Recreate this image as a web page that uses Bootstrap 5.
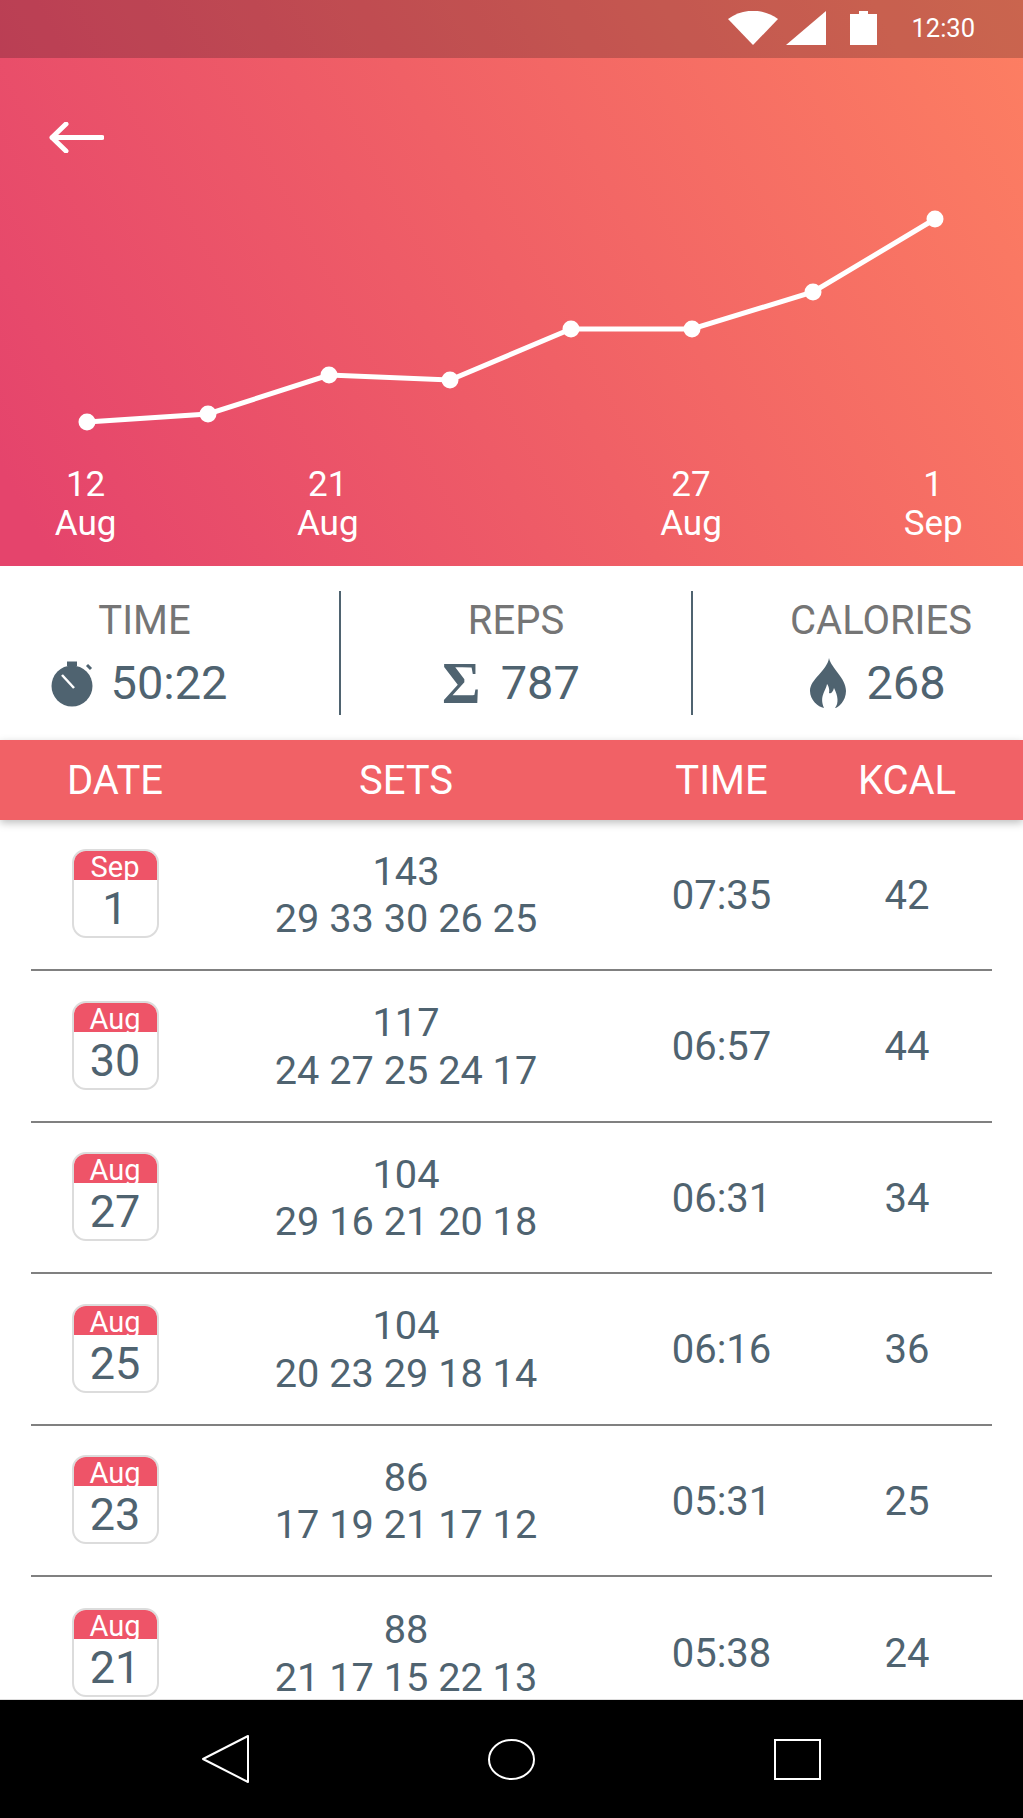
<!DOCTYPE html>
<html lang="en">
<head>
    <meta charset="UTF-8">
    <meta name="viewport" content="width=device-width, initial-scale=1.0">
    <title>Workout history</title>
    <link href="https://cdn.jsdelivr.net/npm/bootstrap@5.3.0/dist/css/bootstrap.min.css" rel="stylesheet">
    <style>
        body {
            width: 1023px;
            height: 1818px;
            overflow: hidden;
            font-family: Roboto, "Liberation Sans", sans-serif;
            color: #4f6370;
        }
        .hero {
            height: 566px;
            background: linear-gradient(62deg, #e5446c 4%, #f06066 50%, #fd7f62 100%);
        }
        .status-bar {
            height: 58px;
            background: rgba(0, 0, 0, 0.2);
            padding-right: 48px;
            padding-bottom: 2px;
            font-size: 25.5px;
        }
        .status-bar svg { display: block; }
        .back-row { padding: 64px 0 0 49px; height: 95px; }
        .chart { display: block; }
        .axis-labels {
            display: grid;
            grid-template-columns: repeat(8, 121.1px);
            padding: 13px 0 0 25px;
            font-size: 35px;
            line-height: 39px;
        }
        .stats {
            height: 174px;
            padding: 25px 0;
        }
        .stat { height: 124px; padding-top: 6px; }
        .stat-time { width: 341px; padding-right: 50px; border-right: 2px solid #4f6370; }
        .stat-reps { width: 352px; border-right: 2px solid #4f6370; }
        .stat-cal { width: 330px; padding-left: 46px; }
        .stat-label { font-size: 40px; line-height: 48px; color: #757575; }
        .stat-value { font-size: 47px; line-height: 56px; margin-top: 10px; gap: 17px; }
        .shift-time { padding-right: 10px; }
        .shift-reps { padding-right: 10px; gap: 20px; }
        .shift-cal { padding-right: 6px; gap: 20px; }
        .sigma {
            font-family: "Liberation Serif", serif;
            font-weight: 700;
            font-size: 59px;
            line-height: 56px;
        }
        .table-head {
            height: 79.5px;
            background: #f16166;
            box-shadow: 0 3px 8px rgba(0, 0, 0, 0.25);
            font-size: 40px;
            position: relative;
        }
        .cols {
            display: grid;
            grid-template-columns: 168px 414px 217px 154px;
            margin: 0 31px;
            align-items: center;
            text-align: center;
        }
        .table-head .cols { height: 79.5px; padding-top: 2px; }
        .log-list { overflow: hidden; }
        .log-row {
            height: 151.5px;
            padding-top: 2px;
            border-bottom: 2px solid #808080;
            font-size: 40px;
            line-height: 47.5px;
        }
        .log-row:last-child { border-bottom: 0; }
        .sets-line { font-size: 39.7px; }
        .cal-icon {
            width: 87px;
            height: 89px;
            margin: -3px auto 0;
            border: 2px solid #dcdcdc;
            border-radius: 14px;
            overflow: hidden;
        }
        .cal-month {
            height: 31px;
            margin: -2px -2px 0;
            background: #ee5468;
            color: #fff;
            font-size: 29px;
            line-height: 37px;
            overflow: hidden;
        }
        .cal-day { font-size: 45px; line-height: 58px; }
        .nav-bar {
            height: 119px;
            background: #000;
            border-top: 1px solid #ddd;
            padding: 0 202px;
        }
    </style>
</head>
<body class="d-flex flex-column">

    <div class="hero text-white flex-shrink-0">
        <div class="status-bar d-flex justify-content-end align-items-center">
            <svg width="50" height="34" viewBox="0 0 50 34" class="me-1"><path d="M0 8C15 -3 35 -3 50 8L25 34Z" fill="#fff"/></svg>
            <svg width="40" height="34" viewBox="0 0 40 34" class="ms-1"><path d="M40 0V34H0Z" fill="#fff"/></svg>
            <svg width="27" height="34" viewBox="0 0 27 34" style="margin-left:24px"><path d="M0 3H9V0H18V3H27V34H0Z" fill="#fff"/></svg>
            <span style="margin-left:34px">12:30</span>
        </div>
        <div class="back-row">
            <svg width="55" height="31" viewBox="0 0 55 31" class="d-block"><path d="M53 15.5H3M17 2L3 15.5L17 29" fill="none" stroke="#fff" stroke-width="5" stroke-linecap="round" stroke-linejoin="round"/></svg>
        </div>
        <svg class="chart" width="1023" height="299" viewBox="0 153 1023 299">
            <polyline points="87,422 208,414 329,375 450,380 571,329 692,329 813,292 935,219" fill="none" stroke="#fff" stroke-width="5"/>
            <g fill="#fff">
                <circle cx="87" cy="422" r="8.5"/>
                <circle cx="208" cy="414" r="8.5"/>
                <circle cx="329" cy="375" r="8.5"/>
                <circle cx="450" cy="380" r="8.5"/>
                <circle cx="571" cy="329" r="8.5"/>
                <circle cx="692" cy="329" r="8.5"/>
                <circle cx="813" cy="292" r="8.5"/>
                <circle cx="935" cy="219" r="8.5"/>
            </g>
        </svg>
        <div class="axis-labels text-center">
            <div>12<br>Aug</div><div></div>
            <div>21<br>Aug</div><div></div><div></div>
            <div>27<br>Aug</div><div></div>
            <div>1<br>Sep</div>
        </div>
    </div>

    <div class="stats d-flex flex-shrink-0 bg-white text-center">
        <div class="stat stat-time">
            <div class="stat-label">TIME</div>
            <div class="stat-value shift-time d-flex justify-content-center align-items-center">
                <svg width="42" height="47" viewBox="0 0 42 47"><circle cx="21" cy="26" r="20.5" fill="#4f6370"/><path d="M16 1.5H26V6H16Z" fill="#4f6370"/><path d="M36 5L40 9" stroke="#4f6370" stroke-width="3"/><path d="M11 15L23 28" stroke="#fff" stroke-width="2.5"/></svg>
                <span>50:22</span>
            </div>
        </div>
        <div class="stat stat-reps">
            <div class="stat-label">REPS</div>
            <div class="stat-value shift-reps d-flex justify-content-center align-items-center">
                <span class="sigma">Σ</span>
                <span>787</span>
            </div>
        </div>
        <div class="stat stat-cal">
            <div class="stat-label">CALORIES</div>
            <div class="stat-value shift-cal d-flex justify-content-center align-items-center">
                <svg width="36" height="50" viewBox="0 0 36 50"><path d="M19 0C21 10 36 20 36 33C36 43 28 50 25 50C29 45 28 38 24 30C23 34 21 36 19 35C20 31 18 27 17 26C16 33 9 38 14 50C8 49 0 42 0 33C0 21 17 13 19 0Z" fill="#4f6370"/></svg>
                <span>268</span>
            </div>
        </div>
    </div>

    <div class="table-head text-white flex-shrink-0">
        <div class="cols">
            <div>DATE</div><div>SETS</div><div>TIME</div><div>KCAL</div>
        </div>
    </div>

    <div class="log-list flex-grow-1 bg-white">
        <div class="cols log-row">
            <div class="cal-icon"><div class="cal-month">Sep</div><div class="cal-day">1</div></div>
            <div class="sets-line">143<br>29 33 30 26 25</div>
            <div>07:35</div>
            <div>42</div>
        </div>
        <div class="cols log-row">
            <div class="cal-icon"><div class="cal-month">Aug</div><div class="cal-day">30</div></div>
            <div class="sets-line">117<br>24 27 25 24 17</div>
            <div>06:57</div>
            <div>44</div>
        </div>
        <div class="cols log-row">
            <div class="cal-icon"><div class="cal-month">Aug</div><div class="cal-day">27</div></div>
            <div class="sets-line">104<br>29 16 21 20 18</div>
            <div>06:31</div>
            <div>34</div>
        </div>
        <div class="cols log-row">
            <div class="cal-icon"><div class="cal-month">Aug</div><div class="cal-day">25</div></div>
            <div class="sets-line">104<br>20 23 29 18 14</div>
            <div>06:16</div>
            <div>36</div>
        </div>
        <div class="cols log-row">
            <div class="cal-icon"><div class="cal-month">Aug</div><div class="cal-day">23</div></div>
            <div class="sets-line">86<br>17 19 21 17 12</div>
            <div>05:31</div>
            <div>25</div>
        </div>
        <div class="cols log-row">
            <div class="cal-icon"><div class="cal-month">Aug</div><div class="cal-day">21</div></div>
            <div class="sets-line">88<br>21 17 15 22 13</div>
            <div>05:38</div>
            <div>24</div>
        </div>
    </div>

    <div class="nav-bar d-flex justify-content-between align-items-center flex-shrink-0">
        <svg width="47" height="48" viewBox="0 0 47 48"><path d="M46 1V47L1 24Z" fill="none" stroke="#fff" stroke-width="2" stroke-linejoin="round"/></svg>
        <svg width="47" height="41" viewBox="0 0 47 41"><ellipse cx="23.5" cy="20.5" rx="22.5" ry="19.5" fill="none" stroke="#fff" stroke-width="2"/></svg>
        <svg width="47" height="41" viewBox="0 0 47 41"><rect x="1" y="1" width="45" height="39" fill="none" stroke="#fff" stroke-width="2"/></svg>
    </div>

    <script src="https://cdn.jsdelivr.net/npm/bootstrap@5.3.0/dist/js/bootstrap.bundle.min.js"></script>
</body>
</html>
